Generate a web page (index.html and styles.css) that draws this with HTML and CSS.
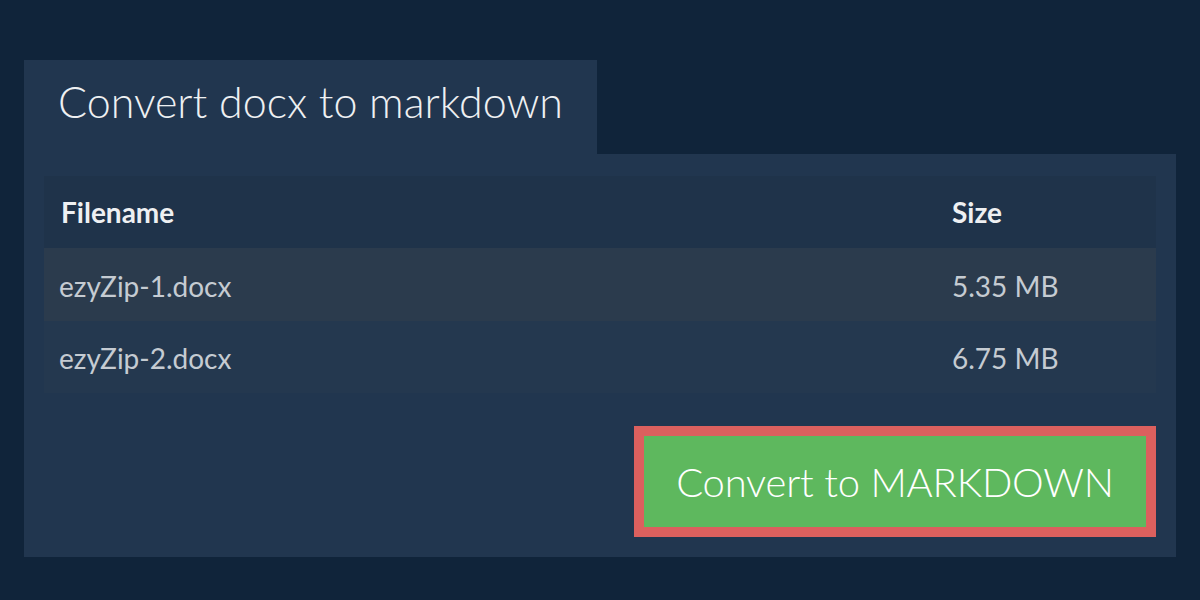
FILE: index.html
```html
<!DOCTYPE html>
<html>
<head>
<meta charset="utf-8">
<link rel="stylesheet" href="styles.css">
</head>
<body>
<div class="wrap">
  <div class="tab">Convert docx to markdown</div>
  <div class="panel">
    <table class="files">
      <thead>
        <tr><th class="c-name">Filename</th><th class="c-size">Size</th></tr>
      </thead>
      <tbody>
        <tr class="odd"><td>ezyZip-1.docx</td><td>5.35 MB</td></tr>
        <tr class="even"><td>ezyZip-2.docx</td><td>6.75 MB</td></tr>
      </tbody>
    </table>
    <div class="actions">
      <button class="convert">Convert to MARKDOWN</button>
    </div>
  </div>
</div>
</body>
</html>
```
FILE: styles.css
```css
html, body {
  margin: 0;
  padding: 0;
  background: #10243a;
  width: 1200px;
  height: 600px;
  overflow: hidden;
  font-family: Lato, "Open Sans", sans-serif;
}
.wrap {
  padding: 60px 24px 0 24px;
}
.tab {
  display: inline-block;
  background: #21364f;
  color: #eef0f2;
  font-weight: 300;
  font-size: 43px;
  height: 94px;
  line-height: 84px;
  padding: 0 0 0 34px;
  box-sizing: border-box;
  width: 573px;
  white-space: nowrap;
}
.panel {
  background: #21364f;
  padding: 22px 20px 20px 20px;
  height: 403px;
  box-sizing: border-box;
}
.files {
  width: 100%;
  border-collapse: collapse;
}
.files th {
  text-align: left;
  color: #eef0f2;
  font-weight: 700;
  font-size: 28px;
  height: 72px;
  padding: 0 17px;
  background: #1f334a;
}
.files th.c-size {
  width: 204px;
  padding: 0;
}
.files td {
  color: #c5cbd2;
  font-size: 28px;
  height: 72.5px;
  line-height: 34px;
  padding: 3px 15px 0 15px;
  box-sizing: border-box;
}
.files td + td {
  padding-left: 0;
}
.files tr.odd td { background: #2b3b4d; }
.files tr.even td { background: #24384f; }
.actions {
  display: flex;
  justify-content: flex-end;
  margin-top: 33px;
}
.convert {
  background: #5eb85e;
  border: 10px solid #dc605e;
  color: #ffffff;
  font-family: Lato, "Open Sans", sans-serif;
  font-weight: 300;
  font-size: 40px;
  letter-spacing: -0.2px;
  width: 522px;
  height: 111px;
  padding: 0;
  box-sizing: border-box;
}
```
